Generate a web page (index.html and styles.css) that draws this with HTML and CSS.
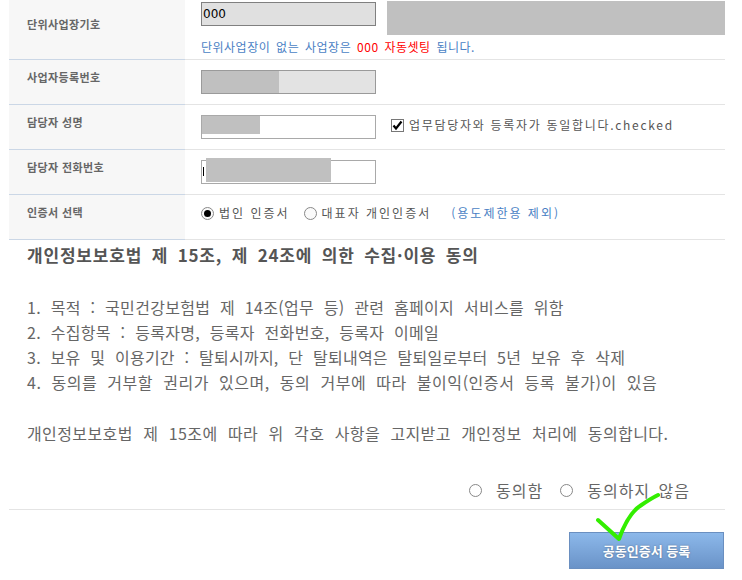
FILE: index.html
```html
<!DOCTYPE html>
<html lang="ko">
<head>
    <meta charset="UTF-8">
    <meta name="viewport" content="width=device-width, initial-scale=1.0">
    <title>공동인증서 등록</title>
    <link rel="stylesheet" href="styles.css">
</head>
<body>

<div id="page">
    <div class="form">
        <div class="row first">
            <div class="label">단위사업장기호</div>
            <div class="value">
                <div class="line">
                    <div class="field disabled dark">000</div>
                    <div class="hidden-block"></div>
                </div>
                <p class="note">단위사업장이 없는 사업장은 <span class="red">000 자동셋팅</span> 됩니다.</p>
            </div>
        </div>
        <div class="row">
            <div class="label">사업자등록번호</div>
            <div class="value">
                <div class="field disabled"><span class="mask mask-reg"></span></div>
            </div>
        </div>
        <div class="row">
            <div class="label">담당자 성명</div>
            <div class="value">
                <div class="line">
                    <div class="field"><span class="mask mask-name"></span></div>
                    <label class="check">
                        <span class="checkbox">
                            <svg width="11" height="11" viewBox="0 0 11 11"><path d="M1.5 5.5 L4 8.5 L9.5 1.5" fill="none" stroke="#000" stroke-width="2.2"/></svg>
                        </span>
                        업무담당자와 등록자가 동일합니다.checked
                    </label>
                </div>
            </div>
        </div>
        <div class="row">
            <div class="label">담당자 전화번호</div>
            <div class="value">
                <div class="field"><span class="caret"></span><span class="mask mask-tel"></span></div>
            </div>
        </div>
        <div class="row">
            <div class="label">인증서 선택</div>
            <div class="value">
                <div class="line radios">
                    <label class="radio-item"><span class="radio on"></span>법인 인증서</label>
                    <label class="radio-item"><span class="radio"></span>대표자 개인인증서</label>
                    <span class="blue">(용도제한용 제외)</span>
                </div>
            </div>
        </div>
    </div>

    <div class="consent">
        <h3>개인정보보호법 제 15조, 제 24조에 의한 수집·이용 동의</h3>
        <ul class="terms">
            <li>1. 목적 : 국민건강보험법 제 14조(업무 등) 관련 홈페이지 서비스를 위함</li>
            <li>2. 수집항목 : 등록자명, 등록자 전화번호, 등록자 이메일</li>
            <li class="wide">3. 보유 및 이용기간 : 탈퇴시까지, 단 탈퇴내역은 탈퇴일로부터 5년 보유 후 삭제</li>
            <li class="wider">4. 동의를 거부할 권리가 있으며, 동의 거부에 따라 불이익(인증서 등록 불가)이 있음</li>
        </ul>
        <p class="agree-text">개인정보보호법 제 15조에 따라 위 각호 사항을 고지받고 개인정보 처리에 동의합니다.</p>
        <div class="agree">
            <label class="agree-item"><span class="circle"></span>동의함</label>
            <label class="agree-item"><span class="circle"></span>동의하지 않음</label>
        </div>
    </div>

    <div class="actions">
        <button type="button">공동인증서 등록</button>
    </div>

    <!-- 손으로 그린 체크 표시 -->
    <svg class="mark" width="742" height="580" viewBox="0 0 742 580">
        <path d="M598 520 L619 539 Q628 514 640 506 Q650 499 658 495" fill="none" stroke="#33ee00" stroke-width="4" stroke-linecap="round" stroke-linejoin="round"/>
    </svg>
</div>

</body>
</html>
```

FILE: styles.css
```css
body {
    margin: 0;
    font-family: "Noto Sans CJK KR", "Noto Sans", sans-serif;
    background-color: white;
    color: #666;
}

#page {
    position: relative;
    width: 742px;
    height: 580px;
    overflow: hidden;
}

.form {
    margin-left: 9px;
    width: 716px;
}

.row {
    display: grid;
    grid-template-columns: 176px 540px;
    height: 45px;
}

.row.first {
    height: 60px;
}

.label {
    background-color: #f7f7f7;
    border-bottom: 1px solid #cbd7e6;
    padding: 9px 0 0 18px;
    font-size: 11px;
    font-weight: bold;
    line-height: 16px;
    letter-spacing: 0.4px;
    color: #666;
}

.row.first .label {
    padding-top: 16px;
}

.value {
    border-bottom: 1px solid #e4e4e4;
    padding: 10px 0 0 16px;
}

.row.first .value {
    padding-top: 2px;
}

.line {
    display: flex;
    align-items: flex-start;
}

.field {
    display: flex;
    align-items: flex-start;
    width: 175px;
    height: 24px;
    box-sizing: border-box;
    border: 1px solid #a9a9a9;
    background-color: white;
}

.field.disabled {
    background-color: #e3e3e3;
    border-color: #9a9a9a;
}

.field.dark {
    border-color: #808080;
    background-color: #e0e0e0;
    color: #000;
    font-family: "DejaVu Sans", sans-serif;
    font-size: 12px;
    line-height: 22px;
    padding-left: 1px;
}

.mask {
    display: block;
    background-color: #c0c0c0;
}

.mask-reg {
    width: 77px;
    height: 22px;
}

.mask-name {
    width: 58px;
    height: 18px;
}

.mask-tel {
    width: 125px;
    height: 24px;
    margin: -3px 0 0 2px;
}

.caret {
    display: block;
    width: 1px;
    height: 9px;
    margin: 6px 0 0 1px;
    background-color: #000;
}

.hidden-block {
    width: 338px;
    height: 34px;
    margin: -1px 0 0 11px;
    background-color: #c0c0c0;
}

.note {
    margin: 4px 0 0;
    font-size: 12px;
    line-height: 16px;
    letter-spacing: 0.5px;
    word-spacing: 2px;
    color: #4a7fc4;
}

.red {
    color: #f00;
}

.check {
    display: flex;
    align-items: center;
    margin: 2px 0 0 15px;
    font-size: 12px;
    line-height: 16px;
    letter-spacing: 1.7px;
    color: #555;
}

.checkbox {
    display: flex;
    align-items: center;
    justify-content: center;
    width: 13px;
    height: 13px;
    box-sizing: border-box;
    border: 1px solid #777;
    background-color: white;
    margin-right: 5px;
}

.radios {
    align-items: center;
    font-size: 12px;
    line-height: 16px;
    letter-spacing: 2px;
    color: #555;
}

.radio-item {
    display: flex;
    align-items: center;
    margin-right: 14px;
}

.radio {
    width: 13px;
    height: 13px;
    box-sizing: border-box;
    border: 1px solid #888;
    border-radius: 50%;
    background-color: #fafafa;
    margin-right: 5px;
    position: relative;
}

.radio.on::after {
    content: "";
    position: absolute;
    left: 2px;
    top: 2px;
    width: 7px;
    height: 7px;
    border-radius: 50%;
    background-color: #000;
}

.blue {
    color: #4a7fc4;
    margin-left: 6px;
}

.consent {
    padding-left: 27px;
}

.consent h3 {
    margin: 2px 0 0;
    font-size: 17px;
    line-height: 25px;
    letter-spacing: 0.8px;
    word-spacing: 4px;
    color: #555;
}

.terms {
    list-style: none;
    margin: 28px 0 0;
    padding: 0;
    font-size: 16px;
    line-height: 25px;
    letter-spacing: 0.3px;
    word-spacing: 5px;
}

.terms .wide {
    letter-spacing: 0.25px;
}

.terms .wider {
    letter-spacing: 0.55px;
}

.agree-text {
    margin: 26px 0 0;
    font-size: 16px;
    line-height: 25px;
    letter-spacing: 0.4px;
    word-spacing: 5.5px;
}

.agree {
    display: flex;
    justify-content: flex-end;
    gap: 17px;
    margin: 32px 0 0;
    padding-right: 52px;
    font-size: 16px;
    line-height: 25px;
    letter-spacing: 1px;
    word-spacing: 3px;
}

.agree-item {
    display: flex;
    align-items: center;
}

.circle {
    width: 13px;
    height: 13px;
    box-sizing: border-box;
    border: 1px solid #888;
    border-radius: 50%;
    margin-right: 14px;
}

.actions {
    display: flex;
    justify-content: flex-end;
    margin: 6px 0 0 9px;
    width: 716px;
    border-top: 1px solid #e4e4e4;
    padding-top: 22px;
}

.actions button {
    width: 155px;
    height: 37px;
    margin-right: 1px;
    border: 1px solid #6a8fc0;
    background: linear-gradient(#8cb8ea, #6a93c8);
    color: white;
    font-family: "Noto Sans CJK KR", sans-serif;
    font-size: 13px;
    font-weight: bold;
    text-shadow: 0 0 2px rgba(0, 0, 0, 0.35);
    cursor: pointer;
}

.mark {
    position: absolute;
    left: 0;
    top: 0;
    pointer-events: none;
}
```
